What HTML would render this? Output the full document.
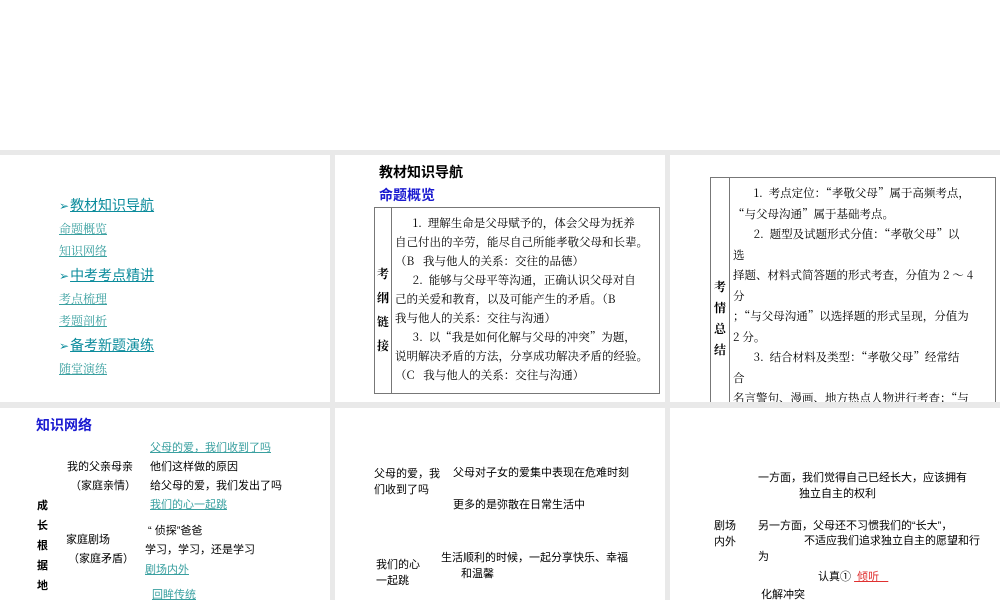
<!DOCTYPE html>
<html><head><meta charset="utf-8"><style>
body{margin:0;width:1000px;height:600px;background:#fff;position:relative;overflow:hidden;font-family:"Noto Serif CJK SC","Liberation Serif",serif;}
.bg{position:absolute;left:0;top:150px;width:1000px;height:450px;background:#e9e9e9;}
.p{position:absolute;background:#fff;overflow:hidden;}
.a{position:absolute;white-space:nowrap;font-size:12px;color:#000;line-height:14px;}
.s .a{font-size:11px;}
.s{font-family:"Liberation Sans","Noto Sans CJK SC",sans-serif;}
.lk{color:#3aa0a0;text-decoration:underline;}
.h{color:#0c8c9c;font-size:15px;text-decoration:underline;font-family:"Liberation Sans","Noto Sans CJK SC",sans-serif;}
.h b{color:#0c8c9c;font-weight:normal;text-decoration:none;display:inline-block;margin-right:1px;font-size:12px}
.bl{color:#1a1ad0;font-weight:bold;font-size:14px !important;font-family:"Liberation Sans","Noto Sans CJK SC",sans-serif;}
.t{position:absolute;border:1px solid #777;}
.t .c{position:absolute;top:0;bottom:0;border-right:1px solid #777;}
</style></head><body>
<div class="bg"></div>

<div class="p" style="left:0;top:155px;width:330px;height:247px;">
<div class="a h" style="left:59px;top:43px;font-size:14px"><b>➢</b>教材知识导航</div>
<div class="a lk" style="left:59px;top:67px">命题概览</div>
<div class="a lk" style="left:59px;top:89px">知识网络</div>
<div class="a h" style="left:59px;top:113px;font-size:14px"><b>➢</b>中考考点精讲</div>
<div class="a lk" style="left:59px;top:137px">考点梳理</div>
<div class="a lk" style="left:59px;top:159px">考题剖析</div>
<div class="a h" style="left:59px;top:183px;font-size:14px"><b>➢</b>备考新题演练</div>
<div class="a lk" style="left:59px;top:207px">随堂演练</div>
</div>

<div class="p" style="left:335px;top:155px;width:330px;height:247px;">
<div class="a" style="left:44px;top:10px;font-size:14px;font-weight:bold;font-family:'Liberation Sans','Noto Sans CJK SC',sans-serif">教材知识导航</div>
<div class="a bl" style="left:44px;top:33px">命题概览</div>
<div class="t" style="left:39px;top:52px;width:284px;height:185px;">
<div class="c" style="left:0;width:16px"></div>
<div class="a" style="left:2px;top:54px;line-height:24px;font-weight:bold">考<br>纲<br>链<br>接</div>
<div class="a" style="left:20px;top:6px;line-height:19px;font-size:11.5px">&nbsp;&nbsp;&nbsp;&nbsp;&nbsp;&nbsp;1.&nbsp;&nbsp;理解生命是父母赋予的，体会父母为抚养<br>自己付出的辛劳，能尽自己所能孝敬父母和长辈。<br>（B&nbsp;&nbsp;&nbsp;我与他人的关系：交往的品德）<br>&nbsp;&nbsp;&nbsp;&nbsp;&nbsp;&nbsp;2.&nbsp;&nbsp;能够与父母平等沟通，正确认识父母对自<br>己的关爱和教育，以及可能产生的矛盾。（B<br>我与他人的关系：交往与沟通）<br>&nbsp;&nbsp;&nbsp;&nbsp;&nbsp;&nbsp;3.&nbsp;&nbsp;以“我是如何化解与父母的冲突”为题，<br>说明解决矛盾的方法，分享成功解决矛盾的经验。<br>（C&nbsp;&nbsp;&nbsp;我与他人的关系：交往与沟通）</div>
</div>
</div>

<div class="p" style="left:670px;top:155px;width:330px;height:247px;">
<div class="t" style="left:40px;top:22px;width:284px;height:260px;">
<div class="c" style="left:0;width:18px"></div>
<div class="a" style="left:3px;top:98px;line-height:21px;font-weight:bold">考<br>情<br>总<br>结</div>
<div class="a" style="left:22px;top:5px;line-height:20.5px;font-size:11.5px">&nbsp;&nbsp;&nbsp;&nbsp;&nbsp;&nbsp;&nbsp;1.&nbsp;&nbsp;考点定位：“孝敬父母”属于高频考点，<br>“与父母沟通”属于基础考点。<br>&nbsp;&nbsp;&nbsp;&nbsp;&nbsp;&nbsp;&nbsp;2.&nbsp;&nbsp;题型及试题形式分值：“孝敬父母”以<br>选<br>择题、材料式简答题的形式考查，分值为 2 ～ 4<br>分<br>；“与父母沟通”以选择题的形式呈现，分值为<br>2 分。<br>&nbsp;&nbsp;&nbsp;&nbsp;&nbsp;&nbsp;&nbsp;3.&nbsp;&nbsp;结合材料及类型：“孝敬父母”经常结<br>合<br>名言警句、漫画、地方热点人物进行考查；“与</div>
</div>
</div>

<div class="p s" style="left:0;top:408px;width:330px;height:192px;">
<div class="a bl" style="left:36px;top:10px">知识网络</div>
<div class="a lk" style="left:150px;top:33px">父母的爱，我们收到了吗</div>
<div class="a" style="left:67px;top:52px">我的父亲母亲</div>
<div class="a" style="left:150px;top:52px">他们这样做的原因</div>
<div class="a" style="left:70px;top:71px">（家庭亲情）</div>
<div class="a" style="left:150px;top:71px">给父母的爱，我们发出了吗</div>
<div class="a lk" style="left:150px;top:90px">我们的心一起跳</div>
<div class="a" style="left:37px;top:88px;line-height:20px;font-weight:bold">成<br>长<br>根<br>据<br>地</div>
<div class="a" style="left:148px;top:116px">“ 侦探”爸爸</div>
<div class="a" style="left:66px;top:125px">家庭剧场</div>
<div class="a" style="left:145px;top:135px">学习，学习，还是学习</div>
<div class="a" style="left:68px;top:144px">（家庭矛盾）</div>
<div class="a lk" style="left:145px;top:155px">剧场内外</div>
<div class="a lk" style="left:152px;top:180px">回眸传统</div>
</div>

<div class="p s" style="left:335px;top:408px;width:330px;height:192px;">
<div class="a" style="left:39px;top:58px;line-height:16px">父母的爱，我<br>们收到了吗</div>
<div class="a" style="left:118px;top:58px">父母对子女的爱集中表现在危难时刻</div>
<div class="a" style="left:118px;top:90px">更多的是弥散在日常生活中</div>
<div class="a" style="left:106px;top:143px">生活顺利的时候，一起分享快乐、幸福</div>
<div class="a" style="left:126px;top:159px">和温馨</div>
<div class="a" style="left:41px;top:149px;line-height:16px">我们的心<br>一起跳</div>
</div>

<div class="p s" style="left:670px;top:408px;width:330px;height:192px;">
<div class="a" style="left:88px;top:63px">一方面，我们觉得自己已经长大，应该拥有</div>
<div class="a" style="left:129px;top:79px">独立自主的权利</div>
<div class="a" style="left:44px;top:110px;line-height:16px">剧场<br>内外</div>
<div class="a" style="left:88px;top:111px">另一方面，父母还不习惯我们的“长大”，</div>
<div class="a" style="left:134px;top:126px">不适应我们追求独立自主的愿望和行</div>
<div class="a" style="left:88px;top:142px">为</div>
<div class="a" style="left:148px;top:162px">认真① <span style="color:#e03030;text-decoration:underline">&nbsp;倾听&nbsp;&nbsp;&nbsp;</span></div>
<div class="a" style="left:91px;top:180px">化解冲突</div>
</div>
</body></html>
